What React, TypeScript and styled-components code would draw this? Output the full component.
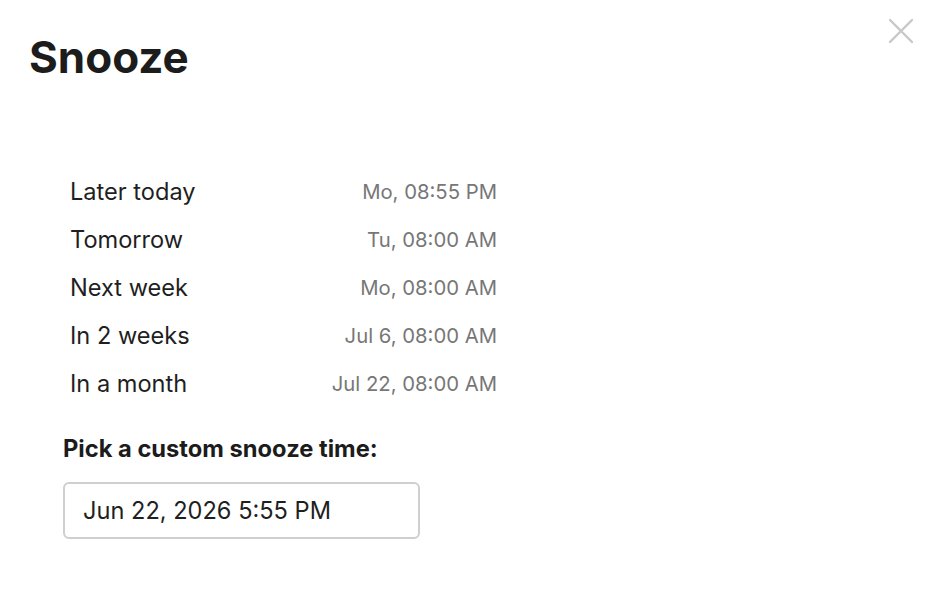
import React from "react";
import styled, { createGlobalStyle } from "styled-components";

const GlobalStyle = createGlobalStyle`
  html, body {
    margin: 0;
    padding: 0;
    background: #fff;
    font-family: Inter, "Noto Sans", sans-serif;
    color: #1f1f1f;
  }
`;

const options = [
  { label: "Later today", time: "Mo, 08:55 PM" },
  { label: "Tomorrow", time: "Tu, 08:00 AM" },
  { label: "Next week", time: "Mo, 08:00 AM" },
  { label: "In 2 weeks", time: "Jul 6, 08:00 AM" },
  { label: "In a month", time: "Jul 22, 08:00 AM" },
];

const App = () => {
  return (
    <>
      <GlobalStyle />
      <Dialog>
        <Header>
          <Title>Snooze</Title>
          <CloseButton aria-label="Close">
            <svg width="26" height="26" viewBox="0 0 26 26">
              <path d="M2 2 L24 24 M24 2 L2 24" stroke="#c8c8c8" strokeWidth="2.4" strokeLinecap="round" />
            </svg>
          </CloseButton>
        </Header>
        <OptionList>
          {options.map((o) => (
            <Option key={o.label}>
              <OptionLabel>{o.label}</OptionLabel>
              <OptionTime>{o.time}</OptionTime>
            </Option>
          ))}
        </OptionList>
        <CustomSection>
          <CustomLabel>Pick a custom snooze time:</CustomLabel>
          <DateInput type="text" defaultValue="Jun 22, 2026 5:55 PM" />
        </CustomSection>
      </Dialog>
    </>
  );
};

export default App;

const Dialog = styled.div`
  width: 932px;
  height: 596px;
  box-sizing: border-box;
  padding: 18px 18px 0 29px;
`;

const Header = styled.div`
  display: flex;
  justify-content: space-between;
  align-items: flex-start;
  height: 64px;
`;

const Title = styled.h1`
  margin: 14px 0 0;
  font-size: 44px;
  font-weight: 700;
  line-height: 50px;
  color: #1c1c1c;
`;

const CloseButton = styled.button`
  border: none;
  background: none;
  padding: 0;
  cursor: pointer;
  width: 26px;
  height: 26px;
`;

const OptionList = styled.div`
  margin: 86px 0 0 41px;
  width: 427px;
  display: flex;
  flex-direction: column;
`;

const Option = styled.div`
  display: flex;
  justify-content: space-between;
  align-items: center;
  height: 48px;
`;

const OptionLabel = styled.span`
  font-size: 23.6px;
  line-height: 30px;
  color: #1f1f1f;
`;

const OptionTime = styled.span`
  font-size: 20.3px;
  line-height: 30px;
  color: #777;
`;

const CustomSection = styled.div`
  margin: 26px 0 0 34px;
  display: flex;
  flex-direction: column;
  gap: 18px;
`;

const CustomLabel = styled.label`
  font-size: 23.7px;
  font-weight: 700;
  color: #1c1c1c;
  line-height: 30px;
`;

const DateInput = styled.input`
  width: 357px;
  height: 57px;
  box-sizing: border-box;
  border: 2px solid #cfcfcf;
  border-radius: 6px;
  padding: 0 18px;
  font-family: Inter, "Noto Sans", sans-serif;
  font-size: 23.6px;
  color: #1f1f1f;
  outline: none;
`;
